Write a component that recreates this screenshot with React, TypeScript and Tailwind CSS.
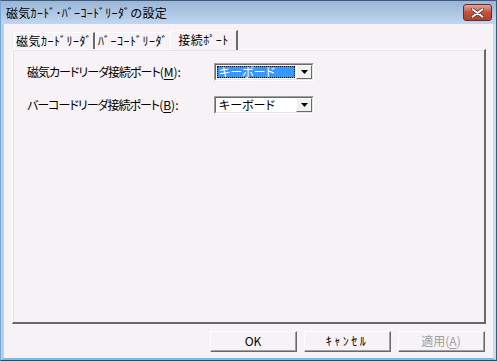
const font = "font-['Noto_Sans_CJK_JP','Noto_Sans',sans-serif]";
const palt = "[font-feature-settings:'palt']";

function Tab({ label, active, width }: { label: string; active?: boolean; width: string }) {
  if (active) {
    return (
      <div
        className={`relative z-10 -mx-[2px] mt-0 flex h-[20px] items-start justify-center border-l border-t border-r-2 border-l-white border-t-white border-r-[#696969] bg-[#f6f2f5] pt-[2px] text-[12px] leading-[14px] tracking-[0.5px] text-black ${width}`}
      >
        {label}
      </div>
    );
  }
  return (
    <div
      className={`mt-[2px] flex h-[17px] items-start justify-center border-l border-t border-r-2 border-l-white border-t-white border-r-[#696969] pt-[1px] text-[12px] leading-[14px] tracking-[0.5px] text-black ${width}`}
    >
      {label}
    </div>
  );
}

function Combo({ focused }: { focused?: boolean }) {
  return (
    <div className="flex h-[18px] w-[100px] border border-b-white border-l-[#a0a0a0] border-r-white border-t-[#a0a0a0]">
      <div className="flex flex-1 border border-b-[#e3e3e3] border-l-[#696969] border-r-[#e3e3e3] border-t-[#696969] bg-white">
        <div className="flex flex-1 items-center p-[1px]">
          {focused ? (
            <div className={`flex h-full flex-1 items-center border border-dotted border-black bg-[#3399ff] pl-[1px] text-[12px] leading-[12px] text-white ${palt}`}>
              キーボード
            </div>
          ) : (
            <div className={`flex h-full flex-1 items-center pl-[2px] text-[12px] leading-[12px] text-black ${palt}`}>
              キーボード
            </div>
          )}
        </div>
        <div className="flex w-[16px] items-center justify-center border border-b-[#696969] border-l-white border-r-[#696969] border-t-white bg-[#f0f0f0]">
          <svg width="7" height="4" viewBox="0 0 7 4">
            <path d="M0 0h7L3.5 4z" fill="#000" />
          </svg>
        </div>
      </div>
    </div>
  );
}

function Button({ label, disabled, wide }: { label: React.ReactNode; disabled?: boolean; wide?: boolean }) {
  return (
    <div className="h-[21px] w-[87px] border border-b-[#696969] border-l-white border-r-[#696969] border-t-white">
      <div className="flex h-full items-center justify-center border-b border-r border-b-[#a0a0a0] border-r-[#a0a0a0] bg-[#f6f2f5]">
        <span className={`text-[12px] leading-[12px] ${wide ? "tracking-[2.5px]" : ""} ${disabled ? "text-[#a0a0a0]" : "text-black"}`}>
          {label}
        </span>
      </div>
    </div>
  );
}

function Label({ text, keyChar }: { text: string; keyChar: string }) {
  return (
    <span className="w-[187px] text-[12px] leading-[14px] text-black">
      <span className={`tracking-[-1px] ${palt}`}>{text}</span>
      (<span className="underline underline-offset-2">{keyChar}</span>):
    </span>
  );
}

export default function App() {
  return (
    <div className={`${font} flex h-[361px] w-[497px] flex-col border border-b-[#2a4a66] border-l-[#7aa7d2] border-r-[#3d5a77] border-t-[#3d5a77] bg-[#6fb6e6]`}>
      {/* title bar */}
      <div className="flex h-[23px] shrink-0 items-center justify-between bg-gradient-to-b from-[#9bb5d6] to-[#c1d7ef] pl-[5px] pr-[4px]">
        <span className="text-[12px] leading-[12px] tracking-[0.3px] text-black">磁気ｶｰﾄﾞ･ﾊﾞｰｺｰﾄﾞﾘｰﾀﾞの設定</span>
        <div className="flex h-[17px] w-[29px] items-center justify-center rounded-[3px] border border-[#6b2a26] bg-gradient-to-b from-[#e0a597] via-[#c4503a] to-[#b2402c]">
          <svg width="13" height="10" viewBox="0 0 13 10">
            <path d="M1 1l11 8M12 1L1 9" stroke="#3b3b3b" strokeWidth="3.4" strokeLinecap="round" />
            <path d="M1.5 1.2l10 7.6M11.5 1.2l-10 7.6" stroke="#fff" strokeWidth="1.8" strokeLinecap="round" />
          </svg>
        </div>
      </div>

      {/* body */}
      <div className="flex flex-1 flex-col border-l-[3px] border-r-[3px] border-b-[2px] border-l-[#b3d0ec] border-r-[#c8dcf0] border-b-[#6fc0e8] bg-[#f6f2f5] pl-[8px] pr-[7px] pt-[6px]">
        {/* tabs */}
        <div className="flex h-[20px] pl-[2px]">
          <Tab label="磁気ｶｰﾄﾞﾘｰﾀﾞ" width="w-[81px]" />
          <Tab label="ﾊﾞｰｺｰﾄﾞﾘｰﾀﾞ" width="w-[77px]" />
          <Tab label="接続ﾎﾟｰﾄ" width="w-[68px]" active />
        </div>

        {/* panel */}
        <div className="-mt-px flex h-[275px] flex-col border border-b-2 border-r-2 border-b-[#696969] border-l-white border-r-[#696969] border-t-white">
          <div className="flex flex-1 flex-col gap-[15px] border-l border-t border-l-[#e3e3e3] border-t-[#e3e3e3] pl-[13px] pt-[12px]">
            <div className="flex items-center">
              <Label text="磁気カードリーダ接続ポート" keyChar="M" />
              <Combo focused />
            </div>
            <div className="flex items-center">
              <Label text="バーコードリーダ接続ポート" keyChar="B" />
              <Combo />
            </div>
          </div>
        </div>

        {/* buttons */}
        <div className="flex justify-end gap-[7px] pr-[1px] pt-[7px]">
          <Button label="OK" />
          <Button label="ｷｬﾝｾﾙ" wide />
          <Button
            label={
              <>
                適用(<span className="underline underline-offset-2">A</span>)
              </>
            }
            disabled
          />
        </div>
      </div>
    </div>
  );
}
